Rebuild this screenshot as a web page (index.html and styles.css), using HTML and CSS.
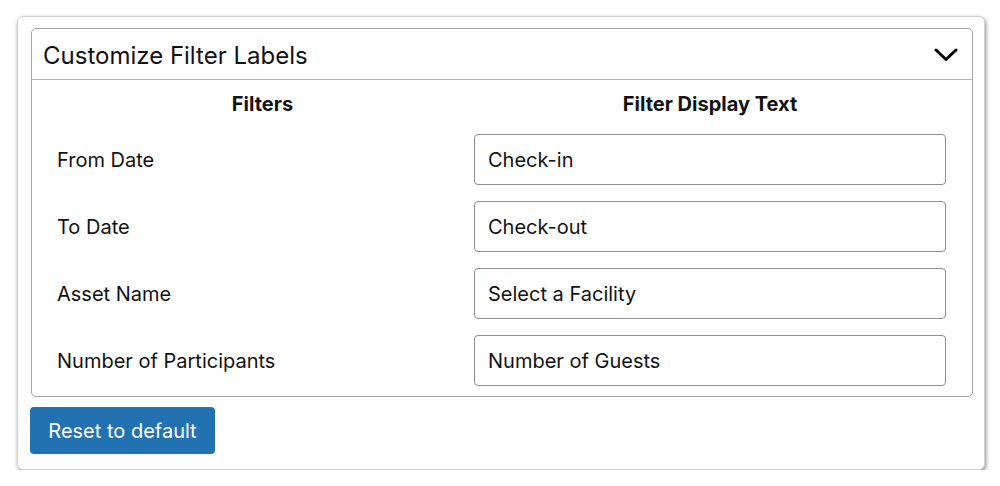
FILE: index.html
```html
<!DOCTYPE html>
<html lang="en">
<head>
<meta charset="utf-8">
<title>Customize Filter Labels</title>
<link rel="stylesheet" href="styles.css">
</head>
<body>
<div class="card">
  <div class="panel">
    <div class="panel-header">
      <h2 class="panel-title">Customize Filter Labels</h2>
      <svg class="chevron" width="24" height="14" viewBox="0 0 24 14" aria-hidden="true">
        <path d="M2 2 L12 11.5 L22 2" fill="none" stroke="#000" stroke-width="3" stroke-linecap="round" stroke-linejoin="round"/>
      </svg>
    </div>
    <div class="filters">
      <div class="head head-filter">Filters</div>
      <div class="head head-text">Filter Display Text</div>

      <div class="label">From Date</div>
      <div class="field"><input class="input" type="text" value="Check-in"></div>

      <div class="label">To Date</div>
      <div class="field"><input class="input" type="text" value="Check-out"></div>

      <div class="label">Asset Name</div>
      <div class="field"><input class="input" type="text" value="Select a Facility"></div>

      <div class="label">Number of Participants</div>
      <div class="field"><input class="input" type="text" value="Number of Guests"></div>
    </div>
  </div>
  <button class="btn" type="button">Reset to default</button>
</div>
</body>
</html>
```

FILE: styles.css
```css
* { box-sizing: border-box; }

html, body {
  margin: 0;
  padding: 0;
  background: #fff;
  font-family: Inter, "Liberation Sans", Arial, sans-serif;
  color: #1d2327;
}

body {
  padding: 16px 0 0 17px;
}

.card {
  width: 968px;
  height: 454px;
  background: #fff;
  border: 1px solid #d0d0d0;
  border-radius: 6px;
  box-shadow: 1px 2px 4px rgba(0, 0, 0, 0.45);
  padding: 11px 11px 0 13px;
}

.panel {
  width: 942px;
  border: 1.5px solid #a7a7a7;
  border-radius: 5px;
  background: #fff;
}

.panel-header {
  height: 51px;
  border-bottom: 1.5px solid #b4b4b4;
  display: flex;
  align-items: center;
  justify-content: space-between;
  padding: 0 14px 0 11px;
}

.panel-title {
  margin: 0;
  font-size: 24px;
  font-weight: 400;
  color: #111;
  padding-top: 2px;
}

.chevron {
  display: block;
  margin-top: 1px;
}

.filters {
  display: grid;
  grid-template-columns: 442px 472px;
  grid-template-rows: 46px repeat(4, 67px);
  padding: 0 0 2px 0;
}

.head {
  font-weight: 700;
  font-size: 20px;
  color: #111;
  display: flex;
  align-items: center;
  justify-content: center;
  padding-top: 2px;
}

.head-filter {
  padding-left: 19px;
}

.label {
  display: flex;
  align-items: center;
  padding-left: 25px;
  font-size: 20px;
  color: #111;
}

.field {
  display: flex;
  align-items: center;
}

.input {
  width: 472px;
  height: 51px;
  border: 1.5px solid #8c8f94;
  border-radius: 4px;
  padding: 0 13px;
  font-family: inherit;
  font-size: 20px;
  color: #111;
  background: #fff;
}

.btn {
  margin-top: 10px;
  margin-left: -1px;
  width: 185px;
  height: 47px;
  border: none;
  border-radius: 4px;
  background: #2271b1;
  color: #fff;
  font-family: inherit;
  font-size: 20px;
  padding: 0;
}
```
